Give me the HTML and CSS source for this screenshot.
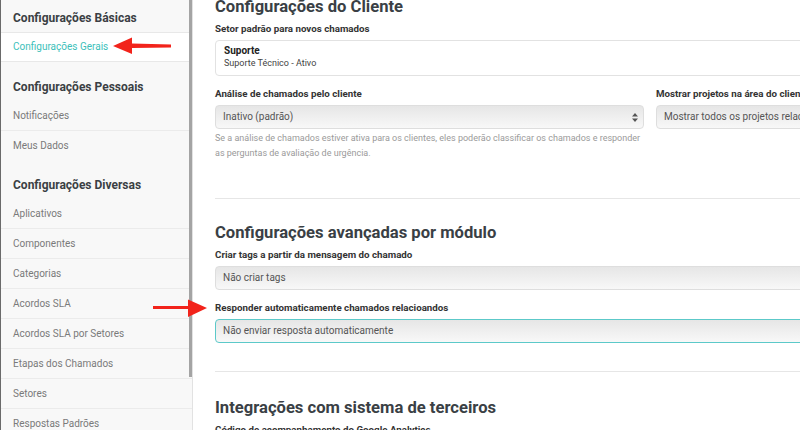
FILE: index.html
```html
<!DOCTYPE html>
<html lang="pt-BR">
  <head>
    <meta charset="UTF-8" />
    <meta name="viewport" content="width=device-width, initial-scale=1.0" />
    <title>Configurações</title>
    <link rel="stylesheet" href="styles.css">
  </head>
  <body>
    <div class="page">
      <aside class="sidebar">
        <div class="sidebar-inner">
          <div class="menu-title">Configurações Básicas</div>
          <ul class="menu">
            <li class="active">Configurações Gerais</li>
          </ul>
          <div class="menu-title">Configurações Pessoais</div>
          <ul class="menu">
            <li>Notificações</li>
            <li>Meus Dados</li>
          </ul>
          <div class="menu-title">Configurações Diversas</div>
          <ul class="menu">
            <li>Aplicativos</li>
            <li>Componentes</li>
            <li>Categorias</li>
            <li>Acordos SLA</li>
            <li>Acordos SLA por Setores</li>
            <li>Etapas dos Chamados</li>
            <li>Setores</li>
            <li>Respostas Padrões</li>
          </ul>
        </div>
        <div class="scroll-thumb"></div>
      </aside>

      <main class="main">
        <h2 class="section-title">Configurações do Cliente</h2>
        <label class="field-label">Setor padrão para novos chamados</label>
        <div class="picker">
          <div class="picker-name">Suporte</div>
          <div class="picker-desc">Suporte Técnico - Ativo</div>
        </div>

        <div class="row">
          <div class="col">
            <label class="field-label">Análise de chamados pelo cliente</label>
            <div class="select">
              Inativo (padrão)
              <svg class="caret" width="6" height="9" viewBox="0 0 6 9">
                <path d="M0 3.5 L3 0 L6 3.5 Z M0 5.5 L3 9 L6 5.5 Z" fill="#555"/>
              </svg>
            </div>
            <p class="help">Se a análise de chamados estiver ativa para os clientes, eles poderão classificar os chamados e responder as perguntas de avaliação de urgência.</p>
          </div>
          <div class="col">
            <label class="field-label">Mostrar projetos na área do cliente</label>
            <div class="select">Mostrar todos os projetos relacionados</div>
          </div>
        </div>

        <hr class="divider first">

        <h2 class="section-title">Configurações avançadas por módulo</h2>
        <label class="field-label">Criar tags a partir da mensagem do chamado</label>
        <div class="select">Não criar tags</div>
        <label class="field-label spaced">Responder automaticamente chamados relacioandos</label>
        <div class="select focused">Não enviar resposta automaticamente</div>

        <hr class="divider second">

        <h2 class="section-title">Integrações com sistema de terceiros</h2>
        <label class="field-label">Código de acompanhamento do Google Analytics</label>
      </main>
    </div>

    <svg class="pointer pointer-left" width="60" height="20" viewBox="0 0 60 20">
      <path d="M58 7.5 L19 6.5 L19 0.5 L0 9 L19 17 L19 11 L58 10.5 Z" fill="#f2231b"/>
    </svg>
    <svg class="pointer pointer-right" width="56" height="20" viewBox="0 0 56 20">
      <path d="M0 7 L35 7 L35 0.5 L54 9 L35 18 L35 10 L0 10 Z" fill="#f2231b"/>
    </svg>
  </body>
</html>
```

FILE: styles.css
```css
body {
  margin: 0;
  font-family: Roboto, "Liberation Sans", Arial, sans-serif;
  color: #333;
  background: #fff;
  width: 800px;
  height: 430px;
  overflow: hidden;
  position: relative;
}
.page {
  display: flex;
  height: 430px;
}

/* sidebar */
.sidebar {
  flex: none;
  width: 191px;
  height: 430px;
  background: #f8f8f8;
  border-left: 1px solid #6a6a6a;
  border-right: 1px solid #e2e2e2;
  position: relative;
  overflow: hidden;
}
.sidebar-inner {
  margin-top: -7px;
}
.menu-title {
  padding: 18px 12px 7px;
  line-height: 14px;
  font-size: 12px;
  font-weight: 700;
  color: #3b3f44;
}
.menu {
  list-style: none;
  margin: 0;
  padding: 0;
}
.menu li {
  padding: 0 12px;
  line-height: 29px;
  font-size: 10px;
  color: #7a7a7a;
  border-bottom: 1px solid #ebebeb;
}
.menu li:last-child {
  border-bottom: none;
}
.menu li.active {
  background: #fff;
  color: #3dbfba;
  border-top: 1px solid #e8e8e8;
  border-bottom: 1px solid #e8e8e8;
  line-height: 28px;
}
.scroll-thumb {
  position: absolute;
  top: 0;
  right: 0;
  width: 3px;
  height: 377px;
  background: #a4a4a4;
}

/* main */
.main {
  flex: none;
  width: 870px;
  padding-left: 22px;
  margin-top: -3px;
}
.section-title {
  margin: 0 0 5px;
  font-size: 16.6px;
  line-height: 20px;
  font-weight: 700;
  color: #3a3f45;
}
.field-label {
  display: block;
  margin-bottom: 4px;
  font-size: 9.75px;
  line-height: 14px;
  font-weight: 700;
  color: #333;
}
.field-label.spaced {
  margin-top: 11px;
}
.picker {
  border: 1px solid #e2e2e2;
  border-radius: 4px;
  padding: 4px 8px 6px;
}
.picker-name {
  font-size: 10px;
  font-weight: 700;
  line-height: 12px;
  color: #222;
}
.picker-desc {
  font-size: 9px;
  line-height: 12px;
  color: #444;
}
.row {
  display: flex;
  gap: 12px;
  margin-top: 11px;
}
.col {
  flex: 1;
  min-width: 0;
}
.select {
  position: relative;
  height: 22px;
  line-height: 22px;
  padding: 0 7px;
  border: 1px solid #dedede;
  border-radius: 4px;
  background: linear-gradient(#e6e6e6, #f8f8f8);
  font-size: 10px;
  color: #555;
  white-space: nowrap;
  overflow: hidden;
}
.select.focused {
  border-color: #5cc9c9;
}
.caret {
  position: absolute;
  right: 5px;
  top: 7px;
}
.help {
  margin: 2px 0 0;
  font-size: 9px;
  line-height: 15px;
  color: #9a9a9a;
}
.divider {
  border: none;
  border-top: 1px solid #e6e6e6;
  margin: 0 0 24px;
}
.divider.first {
  margin-top: 37px;
}
.divider.second {
  margin-top: 28px;
  margin-bottom: 26px;
}

/* annotation arrows */
.pointer {
  position: absolute;
}
.pointer-left {
  left: 113px;
  top: 37px;
}
.pointer-right {
  left: 153px;
  top: 299px;
}
```
